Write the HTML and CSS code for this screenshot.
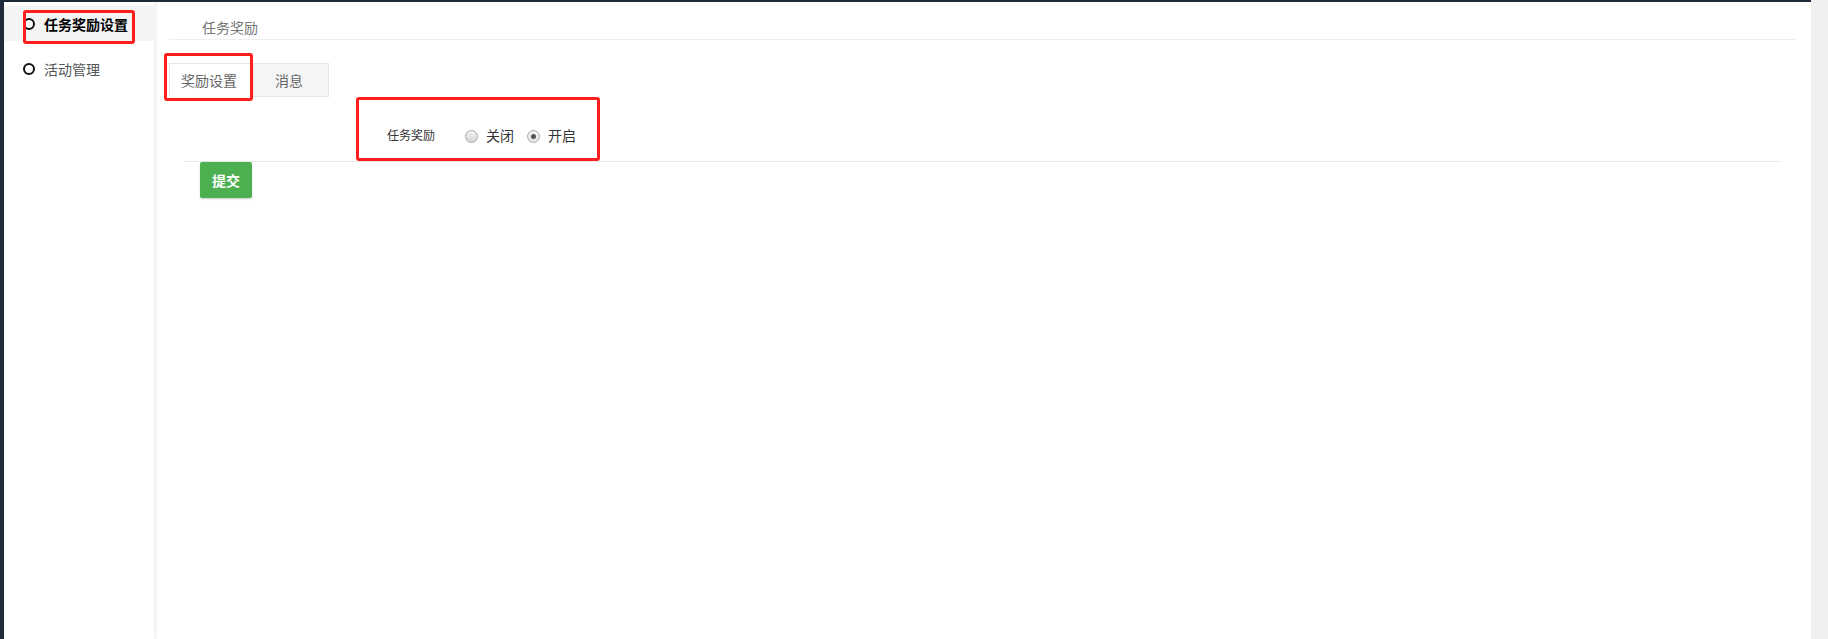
FILE: index.html
```html
<!DOCTYPE html>
<html lang="zh-CN">
<head>
<meta charset="utf-8">
<title>任务奖励</title>
<link rel="stylesheet" href="styles.css">
</head>
<body>
<div class="page">
  <div class="app">
    <div class="topbar"></div>
    <div class="body">
      <div class="strip"></div>
      <aside class="sidebar">
        <div class="nav-item active"><span class="ring"></span><span>任务奖励设置</span></div>
        <div class="nav-item"><span class="ring"></span><span>活动管理</span></div>
      </aside>
      <main class="main">
        <div class="crumb">任务奖励</div>
        <div class="tabs">
          <div class="tab tab-active">奖励设置</div>
          <div class="tab tab-msg">消息</div>
        </div>
        <div class="form-row">
          <div class="label">任务奖励</div>
          <div class="radios">
            <span class="radio"></span><span class="rtext">关闭</span>
            <span class="radio checked"></span><span class="rtext">开启</span>
          </div>
        </div>
        <div class="actions">
          <button class="btn">提交</button>
        </div>
      </main>
    </div>
  </div>
  <div class="gutter"></div>
  <div class="mark mark1"></div>
  <div class="mark mark2"></div>
  <div class="mark mark3"></div>
</div>
</body>
</html>
```
FILE: styles.css
```css
html, body {
  margin: 0;
  padding: 0;
  height: 100%;
}
body {
  font-family: "Noto Sans CJK SC", "Noto Sans", sans-serif;
  font-size: 14px;
  color: #333;
  background: #fff;
}
.page {
  position: relative;
  display: flex;
  height: 639px;
  overflow: hidden;
}
.app {
  flex: 1;
  display: flex;
  flex-direction: column;
}
.gutter {
  width: 17px;
  background: #f0f0f0;
}
.topbar {
  height: 2px;
  background: #1f2b3b;
}
.body {
  flex: 1;
  display: flex;
}
.strip {
  width: 4px;
  background: #1f2b3b;
}
.sidebar {
  width: 150px;
  padding-top: 4px;
  background: #fff;
  box-shadow: 2px 0 4px rgba(0, 0, 0, 0.07);
  position: relative;
  z-index: 1;
}
.nav-item {
  height: 35px;
  display: flex;
  align-items: center;
  margin-bottom: 10px;
  color: #555;
  font-size: 14px;
}
.nav-item.active {
  background: #f4f4f4;
  color: #000;
  font-weight: bold;
}
.ring {
  width: 8px;
  height: 8px;
  border: 2px solid #111;
  border-radius: 50%;
  margin-left: 19px;
  margin-right: 9px;
  flex: none;
}
.main {
  flex: 1;
  padding: 0 15px;
}
.crumb {
  padding: 15px 0 2px 33px;
  line-height: 20px;
  border-bottom: 1px solid #eee;
  color: #777;
  font-size: 14px;
}
.tabs {
  display: flex;
  margin-top: 23px;
  height: 34px;
}
.tab {
  box-sizing: border-box;
  height: 34px;
  display: flex;
  align-items: center;
  color: #666;
  font-size: 14px;
  border: 1px solid #e5e5e5;
}
.tab-active {
  width: 84px;
  padding-left: 11px;
  background: #fff;
  border-bottom-color: transparent;
  border-right: none;
}
.tab-msg {
  width: 76px;
  padding-left: 21px;
  background: #f5f5f5;
}
.form-row {
  margin: 0 15px;
  display: flex;
  align-items: center;
  padding: 28px 0 16px;
  border-bottom: 1px solid #e8e8e8;
}
.label {
  width: 251px;
  text-align: right;
  font-size: 12px;
  line-height: 20px;
  color: #333;
}
.radios {
  margin-left: 30px;
  display: flex;
  align-items: center;
  line-height: 20px;
}
.radio {
  box-sizing: border-box;
  width: 13px;
  height: 13px;
  border-radius: 50%;
  border: 1px solid #aaa;
  background: linear-gradient(#f2f2f2, #d6d6d6);
  margin-top: 2px;
  position: relative;
}
.radio.checked::after {
  content: "";
  position: absolute;
  left: 3px;
  top: 3px;
  width: 5px;
  height: 5px;
  border-radius: 50%;
  background: #555;
}
.radio.checked {
  background: linear-gradient(#f4f4f4, #e4e4e4);
}
.rtext {
  margin-left: 8px;
  margin-right: 13px;
  font-size: 14px;
  color: #333;
}
.actions {
  margin: 0 15px;
  padding-left: 16px;
}
.btn {
  width: 52px;
  height: 36px;
  border: none;
  border-radius: 2px;
  background: #4caf50;
  color: #fff;
  font-family: "Noto Sans CJK SC", sans-serif;
  font-size: 14px;
  font-weight: bold;
  box-shadow: 0 1px 2px rgba(0, 0, 0, 0.2);
  padding: 0;
}
.mark {
  position: absolute;
  box-sizing: border-box;
  border: 3px solid #ff1e1e;
  border-radius: 3px;
  z-index: 5;
}
.mark1 {
  left: 23px;
  top: 10px;
  width: 112px;
  height: 34px;
}
.mark2 {
  left: 164px;
  top: 53px;
  width: 89px;
  height: 48px;
}
.mark3 {
  left: 356px;
  top: 97px;
  width: 244px;
  height: 64px;
}
```
